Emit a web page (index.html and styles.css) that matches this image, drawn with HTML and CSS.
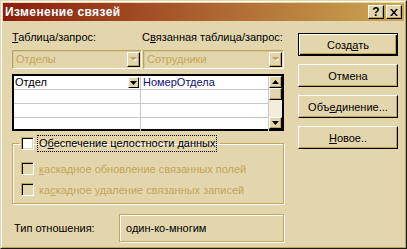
FILE: index.html
```html
<!DOCTYPE html>
<html>
<head>
<meta charset="utf-8">
<link rel="stylesheet" href="styles.css">
</head>
<body>
<div class="window">
  <div class="frame">
    <div class="titlebar">
      <span class="title">Изменение связей</span>
      <div class="tb-buttons">
        <div class="tb-btn">?</div>
        <div class="tb-btn"><svg width="8" height="7" viewBox="0 0 8 7"><path d="M0 0h2l2 2.5L6 0h2L5 3.5 8 7H6L4 4.5 2 7H0l3-3.5z" fill="#000"/></svg></div>
      </div>
    </div>
    <div class="content">
      <div class="left">
        <div class="labels">
          <span class="lbl lbl1"><u>Т</u>аблица/запрос:</span>
          <span class="lbl lbl2">С<u>в</u>язанная таблица/запрос:</span>
        </div>
        <div class="combos">
          <div class="combo combo1"><span class="combo-text">Отделы</span><div class="cbtn"><svg width="7" height="5" viewBox="0 0 7 5"><path d="M1 1h5L3.5 3.5z" fill="#fff" transform="translate(1 1)"/><path d="M0 0h7L3.5 3.5z" fill="#C2A660"/></svg></div></div>
          <div class="combo combo2"><span class="combo-text">Сотрудники</span><div class="cbtn"><svg width="7" height="5" viewBox="0 0 7 5"><path d="M1 1h5L3.5 3.5z" fill="#fff" transform="translate(1 1)"/><path d="M0 0h7L3.5 3.5z" fill="#C2A660"/></svg></div></div>
        </div>
        <div class="grid">
          <div class="cells">
            <div class="row"><div class="cell c1"><span>Отдел</span><div class="ddbtn"><svg width="7" height="4" viewBox="0 0 7 4"><path d="M0 0h7L3.5 4z" fill="#000"/></svg></div></div><div class="cell c2 field">НомерОтдела</div></div>
            <div class="row"><div class="cell c1"></div><div class="cell c2"></div></div>
            <div class="row"><div class="cell c1"></div><div class="cell c2"></div></div>
            <div class="row last"><div class="cell c1"></div><div class="cell c2"></div></div>
          </div>
          <div class="vscroll">
            <div class="sbtn"><svg width="7" height="4" viewBox="0 0 7 4"><path d="M0 4h7L3.5 0z" fill="#000"/></svg></div>
            <div class="thumb"></div>
            <div class="track"></div>
            <div class="sbtn"><svg width="7" height="4" viewBox="0 0 7 4"><path d="M0 0h7L3.5 4z" fill="#000"/></svg></div>
          </div>
        </div>
        <fieldset class="group">
          <legend class="legend"><span class="chk"></span><span class="focus">О<u>б</u>еспечение целостности данных</span></legend>
          <div class="opt"><span class="chk dis"></span><span class="dtext"><u>к</u>аскадное обновление связанных полей</span></div>
          <div class="opt"><span class="chk dis"></span><span class="dtext">ка<u>с</u>кадное удаление связанных записей</span></div>
        </fieldset>
        <div class="reltype">
          <span class="rel-label">Тип отношения:</span>
          <div class="relbox">один-ко-многим</div>
        </div>
      </div>
      <div class="right">
        <div class="btn default">Созд<u>а</u>ть</div>
        <div class="btn">Отмена</div>
        <div class="btn">Объ<u>е</u>динение...</div>
        <div class="btn"><u>Н</u>овое..</div>
      </div>
    </div>
  </div>
</div>
</body>
</html>
```
FILE: styles.css
```css
* { box-sizing: border-box; }
html, body { margin: 0; padding: 0; }
body {
  width: 407px;
  height: 249px;
  overflow: hidden;
  font-family: "Liberation Sans", Arial, sans-serif;
  font-size: 11px;
  color: #000;
  background: #E3D6AD;
}
u { text-decoration: underline; text-underline-offset: 1px; }

.window {
  width: 407px;
  height: 249px;
  background: #E3D6AD;
  border: 1px solid;
  border-color: #E3D6AD #1e1a0c #1e1a0c #E3D6AD;
}
.frame {
  height: 100%;
  border: 1px solid;
  border-color: #fff #BFA35A #BFA35A #fff;
  padding: 1px;
  display: flex;
  flex-direction: column;
}
.titlebar {
  height: 18px;
  flex: none;
  background: linear-gradient(to right, #8C1B0B, #CBA853);
  display: flex;
  align-items: flex-start;
  padding-left: 2px;
}
.title {
  flex: 1;
  color: #fff;
  font-weight: bold;
  font-size: 12px;
  letter-spacing: 0.4px;
  line-height: 18px;
}
.tb-buttons {
  display: flex;
  gap: 2px;
  margin-top: 2px;
  margin-right: 2px;
}
.tb-btn {
  width: 16px;
  height: 14px;
  background: #E3D6AD;
  border: 1px solid;
  border-color: #fff #000 #000 #fff;
  box-shadow: inset -1px -1px 0 #BFA35A;
  display: flex;
  align-items: center;
  justify-content: center;
  font-weight: bold;
  font-size: 12px;
  line-height: 12px;
}

.content {
  display: flex;
  padding-left: 9px;
}
.left {
  width: 272px;
  display: flex;
  flex-direction: column;
}
.labels {
  margin-top: 10px;
  height: 13px;
  line-height: 13px;
  display: flex;
}
.lbl1 { width: 130px; }

.combos {
  margin-top: 6px;
  display: flex;
  gap: 1px;
}
.combo {
  height: 19px;
  border: 1px solid;
  border-color: #BFA35A #fff #fff #BFA35A;
  box-shadow: inset 1px 1px 0 #D6C79A;
  display: flex;
  align-items: stretch;
  padding: 1px;
  background: #E3D6AD;
}
.combo1 { width: 130px; }
.combo2 { width: 141px; }
.combo-text {
  flex: 1;
  color: #C4A55C;
  line-height: 15px;
  padding-left: 2px;
}
.cbtn {
  width: 13px;
  border: 1px solid;
  border-color: #fff #000 #000 #fff;
  box-shadow: inset -1px -1px 0 #BFA35A;
  display: flex;
  align-items: center;
  justify-content: center;
}

.grid {
  margin-top: 5px;
  height: 57px;
  border: 2px solid #000;
  background: #fff;
  display: flex;
}
.cells { width: 255px; }
.row {
  display: flex;
  height: 14px;
  border-bottom: 1px solid #C8C8C8;
}
.row.last { border-bottom: none; }
.cell {
  height: 13px;
  line-height: 13px;
  border-right: 1px solid #C8C8C8;
  display: flex;
  align-items: center;
}
.c1 { width: 127px; padding-left: 1px; }
.c2 { width: 128px; padding-left: 2px; }
.c1 span { flex: 1; }
.field { color: #101070; }
.ddbtn {
  width: 11px;
  height: 11px;
  margin-right: 1px;
  background: #E3D6AD;
  border: 1px solid;
  border-color: #fff #000 #000 #fff;
  display: flex;
  align-items: center;
  justify-content: center;
}
.vscroll {
  width: 13px;
  display: flex;
  flex-direction: column;
}
.sbtn, .thumb {
  height: 12px;
  background: #E3D6AD;
  border: 1px solid;
  border-color: #fff #000 #000 #fff;
  box-shadow: inset -1px -1px 0 #BFA35A;
  display: flex;
  align-items: center;
  justify-content: center;
}
.track {
  flex: 1;
  background: #F3EDD9;
}

.group {
  margin: 4px 0 0 0;
  padding: 6px 0 0 6px;
  height: 69px;
  border: 1px solid #C4A55C;
  box-shadow: inset 1px 1px 0 #fff, 1px 1px 0 #fff;
}
.legend {
  padding: 0 3px 0 2px;
  height: 17px;
  display: flex;
  align-items: center;
}
.chk {
  width: 13px;
  height: 13px;
  flex: none;
  background: #fff;
  border: 1px solid;
  border-color: #BFA35A #fff #fff #BFA35A;
  box-shadow: inset 1px 1px 0 #000, inset -1px -1px 0 #E3D6AD;
}
.chk.dis { background: #E3D6AD; }
.focus {
  margin-left: 3px;
  padding: 0 1px;
  line-height: 15px;
  border: 1px dotted #000;
}
.opt {
  height: 21px;
  display: flex;
  align-items: center;
  padding-left: 2px;
}
.dtext {
  margin-left: 5px;
  color: #C4A55C;
}

.reltype {
  margin-top: 10px;
  display: flex;
  align-items: center;
}
.rel-label {
  padding-left: 2px;
  flex: 1;
}
.relbox {
  width: 165px;
  height: 28px;
  border: 1px solid #C4A55C;
  box-shadow: inset 1px 1px 0 #fff, 1px 1px 0 #fff;
  padding-left: 6px;
  line-height: 26px;
}

.right {
  margin-left: 14px;
  width: 100px;
  display: flex;
  flex-direction: column;
}
.btn {
  margin-top: 8px;
  height: 23px;
  background: #E3D6AD;
  border: 1px solid;
  border-color: #fff #000 #000 #fff;
  box-shadow: inset -1px -1px 0 #BFA35A;
  display: flex;
  align-items: center;
  justify-content: center;
}
.btn.default {
  margin-top: 12px;
  border: 1px solid #000;
  box-shadow: inset 1px 1px 0 #fff, inset -1px -1px 0 #000, inset -2px -2px 0 #BFA35A;
}
```
